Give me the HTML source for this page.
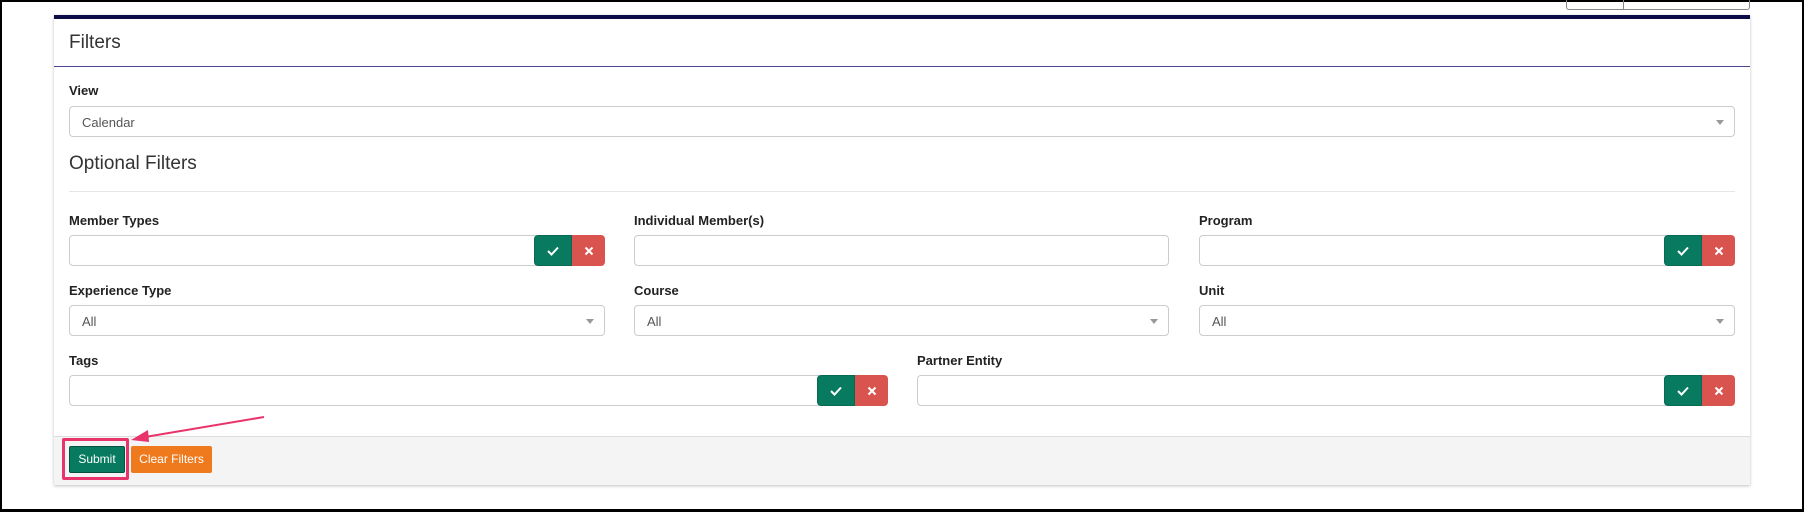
<!DOCTYPE html>
<html><head><meta charset="utf-8"><style>
*{box-sizing:border-box;margin:0;padding:0}
body{width:1804px;height:512px;background:#fff;position:relative;overflow:hidden;font-family:"Liberation Sans",Arial,sans-serif}
.a{position:absolute}
.frame{left:0;top:0;width:1804px;height:512px;border:2px solid #000;border-bottom-width:3px;border-right-width:2px}
.panel{left:54px;top:15px;width:1696px;height:470px;background:#fff;border-top:4px solid #0c0c47;box-shadow:0 1px 3px rgba(0,0,0,.25)}
.lbl{font-size:13px;font-weight:bold;color:#222}
.inp{background:#fff;border:1px solid #ccc;border-radius:4px;height:31px}
.sel{font-size:13px;color:#555;padding:8px 12px}
.car{position:absolute;right:10px;top:13px;width:0;height:0;border-left:4px solid transparent;border-right:4px solid transparent;border-top:5px solid #999}
.ok{background:#077a5f;border-radius:4px 0 0 4px;height:31px;border:1px solid #066a52}
.no{background:#d9534f;border-radius:0 4px 4px 0;height:31px}
.ok svg,.no svg{position:absolute;left:50%;top:50%;transform:translate(-50%,-50%)}
</style></head><body>
<div class="a frame"></div>
<div class="a" style="left:1566px;top:0;width:184px;height:10px;border:1px solid #888;border-top:none;border-radius:0 0 3px 3px"></div>
<div class="a" style="left:1623px;top:0;width:1px;height:10px;background:#888"></div>
<div class="a panel"></div>
<div class="a" style="left:69px;top:32px;font-size:19px;color:#333">Filters</div>
<div class="a" style="left:54px;top:66px;width:1696px;height:1px;background:#4b4690"></div>
<div class="a lbl" style="left:69px;top:83px">View</div>
<div class="a inp sel" style="left:69px;top:106px;width:1666px">Calendar<span class="car"></span></div>
<div class="a" style="left:69px;top:153px;font-size:19px;color:#333">Optional Filters</div>
<div class="a" style="left:69px;top:191px;width:1666px;height:1px;background:#e6e6e6"></div>

<div class="a lbl" style="left:69px;top:213px">Member Types</div>
<div class="a inp" style="left:69px;top:235px;width:467px;border-radius:4px 0 0 4px"></div>
<div class="a ok" style="left:534px;top:235px;width:38px"><svg width="12" height="10" viewBox="0 0 12 10"><path d="M1 5l3.5 3.5L11 1.5" fill="none" stroke="#fff" stroke-width="2"/></svg></div>
<div class="a no" style="left:572px;top:235px;width:33px"><svg width="9" height="9" viewBox="0 0 9 9"><path d="M1 1l7 7M8 1L1 8" stroke="#fff" stroke-width="2"/></svg></div>

<div class="a lbl" style="left:634px;top:213px">Individual Member(s)</div>
<div class="a inp" style="left:634px;top:235px;width:535px"></div>

<div class="a lbl" style="left:1199px;top:213px">Program</div>
<div class="a inp" style="left:1199px;top:235px;width:467px;border-radius:4px 0 0 4px"></div>
<div class="a ok" style="left:1664px;top:235px;width:38px"><svg width="12" height="10" viewBox="0 0 12 10"><path d="M1 5l3.5 3.5L11 1.5" fill="none" stroke="#fff" stroke-width="2"/></svg></div>
<div class="a no" style="left:1702px;top:235px;width:33px"><svg width="9" height="9" viewBox="0 0 9 9"><path d="M1 1l7 7M8 1L1 8" stroke="#fff" stroke-width="2"/></svg></div>

<div class="a lbl" style="left:69px;top:283px">Experience Type</div>
<div class="a inp sel" style="left:69px;top:305px;width:536px">All<span class="car"></span></div>
<div class="a lbl" style="left:634px;top:283px">Course</div>
<div class="a inp sel" style="left:634px;top:305px;width:535px">All<span class="car"></span></div>
<div class="a lbl" style="left:1199px;top:283px">Unit</div>
<div class="a inp sel" style="left:1199px;top:305px;width:536px">All<span class="car"></span></div>

<div class="a lbl" style="left:69px;top:353px">Tags</div>
<div class="a inp" style="left:69px;top:375px;width:750px;border-radius:4px 0 0 4px"></div>
<div class="a ok" style="left:817px;top:375px;width:38px"><svg width="12" height="10" viewBox="0 0 12 10"><path d="M1 5l3.5 3.5L11 1.5" fill="none" stroke="#fff" stroke-width="2"/></svg></div>
<div class="a no" style="left:855px;top:375px;width:33px"><svg width="9" height="9" viewBox="0 0 9 9"><path d="M1 1l7 7M8 1L1 8" stroke="#fff" stroke-width="2"/></svg></div>

<div class="a lbl" style="left:917px;top:353px">Partner Entity</div>
<div class="a inp" style="left:917px;top:375px;width:749px;border-radius:4px 0 0 4px"></div>
<div class="a ok" style="left:1664px;top:375px;width:38px"><svg width="12" height="10" viewBox="0 0 12 10"><path d="M1 5l3.5 3.5L11 1.5" fill="none" stroke="#fff" stroke-width="2"/></svg></div>
<div class="a no" style="left:1702px;top:375px;width:33px"><svg width="9" height="9" viewBox="0 0 9 9"><path d="M1 1l7 7M8 1L1 8" stroke="#fff" stroke-width="2"/></svg></div>

<div class="a" style="left:54px;top:436px;width:1696px;height:49px;background:#f4f4f4;border-top:1px solid #ddd"></div>
<div class="a" style="left:62px;top:438px;width:67px;height:42px;border:3px solid #e8336b;border-radius:2px"></div>
<div class="a" style="left:69px;top:446px;width:56px;height:27px;background:#077a5f;border:1px solid #05503e;border-radius:2px;color:#fff;font-size:12px;text-align:center;line-height:25px">Submit</div>
<div class="a" style="left:131px;top:446px;width:81px;height:27px;background:#ef7a1e;border-radius:2px;color:#fff;font-size:12px;text-align:center;line-height:27px">Clear Filters</div>
<svg class="a" style="left:0;top:0" width="1804" height="512"><line x1="264" y1="417" x2="145" y2="437" stroke="#e8336b" stroke-width="2"/><path d="M131 440l17-10 1 12z" fill="#e8336b"/></svg>
</body></html>
